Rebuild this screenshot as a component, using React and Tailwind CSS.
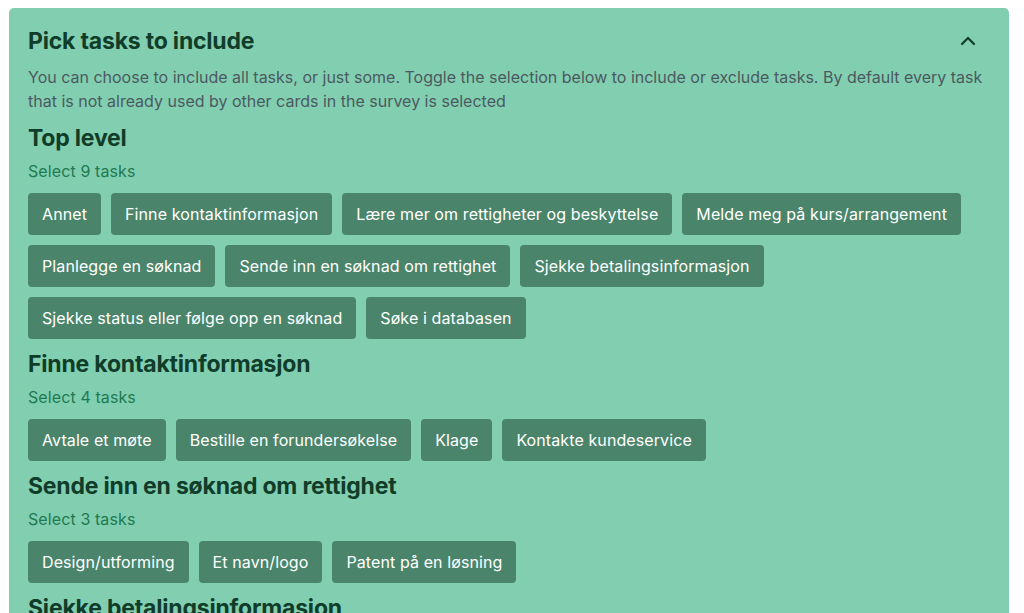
import { ChevronUp } from "lucide-react";

const groups = [
  {
    title: "Top level",
    tasks: [
      "Annet",
      "Finne kontaktinformasjon",
      "Lære mer om rettigheter og beskyttelse",
      "Melde meg på kurs/arrangement",
      "Planlegge en søknad",
      "Sende inn en søknad om rettighet",
      "Sjekke betalingsinformasjon",
      "Sjekke status eller følge opp en søknad",
      "Søke i databasen",
    ],
  },
  {
    title: "Finne kontaktinformasjon",
    tasks: ["Avtale et møte", "Bestille en forundersøkelse", "Klage", "Kontakte kundeservice"],
  },
  {
    title: "Sende inn en søknad om rettighet",
    tasks: ["Design/utforming", "Et navn/logo", "Patent på en løsning"],
  },
  {
    title: "Sjekke betalingsinformasjon",
    tasks: ["Betale en faktura", "Se kvitteringer"],
  },
];

function TaskGroup({ title, tasks }) {
  return (
    <div className="mt-[9px]">
      <h3 className="text-[23px] leading-[32px] font-bold text-[#0f3d29] tracking-[-0.2px]">{title}</h3>
      <p className="mt-[5px] text-[16px] leading-6 text-[#1e7a52] tracking-[0.1px]">Select {tasks.length} tasks</p>
      <div className="mt-[10px] flex flex-wrap gap-[10px]">
        {tasks.map((t) => (
          <button
            key={t}
            className="h-[42px] px-[14px] rounded-[4px] bg-[#4a856b] text-white text-[16px] leading-6 tracking-[0.1px]"
          >
            {t}
          </button>
        ))}
      </div>
    </div>
  );
}

export default function App() {
  return (
    <div className="h-[613px] overflow-hidden bg-white pt-2 font-['Inter',sans-serif]">
      <div className="ml-[9px] w-[1000px] rounded-[5px] bg-[#82ceb0] px-[19px] pt-[19px] pb-6">
        <div className="flex items-center justify-between">
          <h2 className="text-[23px] leading-[28px] font-bold text-[#0f3d29] tracking-[-0.2px]">
            Pick tasks to include
          </h2>
          <ChevronUp className="h-6 w-6 mr-[10px] text-[#0f3d29]" strokeWidth={2.2} />
        </div>
        <p className="mt-[10px] text-[16px] leading-6 text-[#4b5a60]">
          You can choose to include all tasks, or just some. Toggle the selection below to include or exclude
          tasks. By default every task that is not already used by other cards in the survey is selected
        </p>
        {groups.map((g) => (
          <TaskGroup key={g.title} {...g} />
        ))}
      </div>
    </div>
  );
}
